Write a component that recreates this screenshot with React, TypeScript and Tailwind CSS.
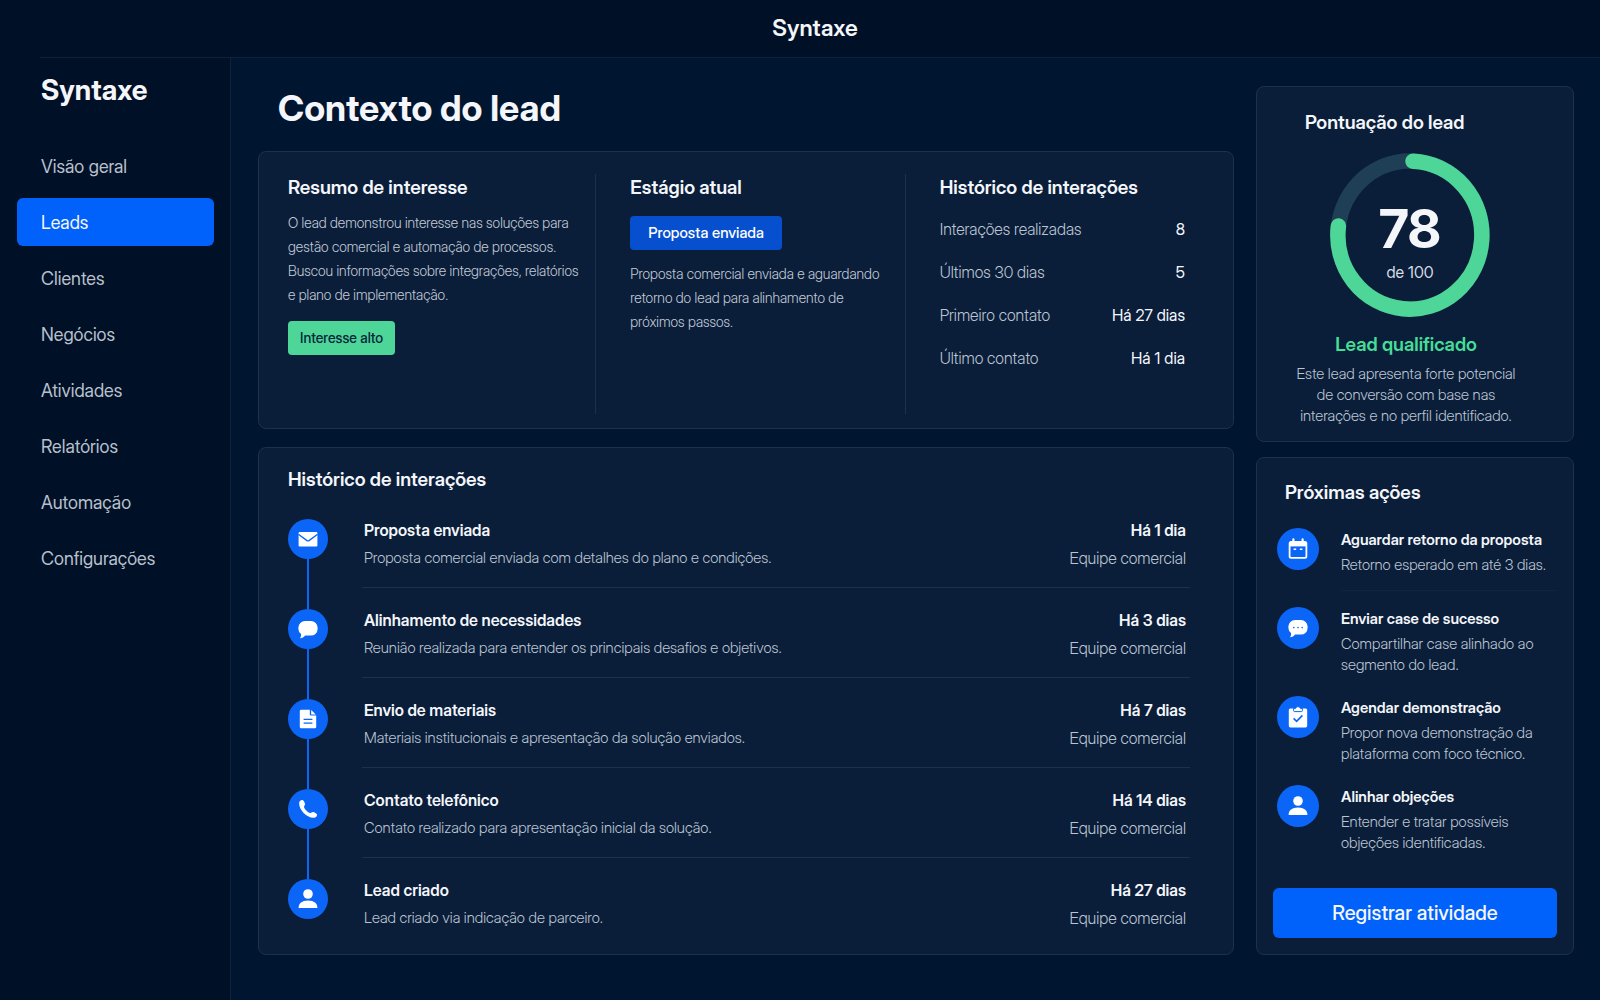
import type { ReactNode } from "react";

const navLinks = [
  { label: "Visão geral", href: "#visao-geral" },
  { label: "Leads", href: "#leads", active: true },
  { label: "Clientes", href: "#clientes" },
  { label: "Negócios", href: "#negocios" },
  { label: "Atividades", href: "#atividades" },
  { label: "Relatórios", href: "#relatorios" },
  { label: "Automação", href: "#automacao" },
  { label: "Configurações", href: "#configuracoes" },
];

const stats = [
  { label: "Interações realizadas", value: "8" },
  { label: "Últimos 30 dias", value: "5" },
  { label: "Primeiro contato", value: "Há 27 dias" },
  { label: "Último contato", value: "Há 1 dia" },
];

const Icon = ({ children }: { children: ReactNode }) => (
  <svg viewBox="0 0 24 24" className="h-6 w-6" fill="white" aria-hidden="true">
    {children}
  </svg>
);

const MailIcon = () => (
  <Icon>
    <rect x="2.6" y="5" width="18.8" height="14.4" rx="1.2" />
    <path d="M2.4 7.2L11 13.6Q12 14.3 13 13.6L21.6 7.2" fill="none" stroke="#0b66f8" strokeWidth="1.3" />
  </Icon>
);

const BubbleIcon = ({ dots = false }: { dots?: boolean }) => (
  <Icon>
    <path d="M9 4h6a6.6 6.6 0 0 1 6.6 6.6v1.4a6.6 6.6 0 0 1-6.6 6.6H9.200c-1.300 1.700-3 2.600-5.200 2.700.9-1.100 1.300-2.500 1-4.200A6.600 6.600 0 0 1 2.400 12v-1.400A6.600 6.600 0 0 1 9 4z" />
    {dots && (
      <g fill="#0b66f8">
        <circle cx="7.8" cy="11.6" r="0.8" />
        <circle cx="12" cy="11.6" r="0.8" />
        <circle cx="16.2" cy="11.6" r="0.8" />
      </g>
    )}
  </Icon>
);

const FileIcon = () => (
  <Icon>
    <path d="M5 2.8h8.8v4.4a1.4 1.4 0 0 0 1.4 1.4h5V20a1.2 1.2 0 0 1-1.2 1.2H5A1.2 1.2 0 0 1 3.8 20V4A1.2 1.2 0 0 1 5 2.8z" />
    <path d="M15.2 3l4.6 4.4h-4.6z" />
    <path d="M7.6 12.4h8.8M7.6 16.2h8.8" stroke="#0b66f8" strokeWidth="1.3" />
  </Icon>
);

const PhoneIcon = () => (
  <Icon>
    <path d="M3.2 5.6c.3-1.8 2-3 3.3-2.6 1 .3 2.3 2.7 2.5 3.9.2 1.1-1.1 1.9-1 2.9.3 2.3 3.9 5.9 6.2 6.2 1 .1 1.8-1.2 2.9-1 1.2.2 3.7 1.5 3.9 2.5.4 1.4-.8 3-2.6 3.3C11.3 21.7 2.3 12.7 3.2 5.6z" />
  </Icon>
);

const PersonIcon = () => (
  <Icon>
    <circle cx="12" cy="7" r="4.8" />
    <path d="M2.6 21c0-4.6 3.4-7.4 9.4-7.4s9.4 2.8 9.4 7.4z" />
  </Icon>
);

const CalendarIcon = () => (
  <Icon>
    <rect x="3.6" y="4.8" width="16.8" height="16" rx="1.6" fill="none" stroke="white" strokeWidth="1.8" />
    <path d="M3.6 4.8h16.8v4.6H3.6z" />
    <path d="M7.4 2.4v3M16.6 2.4v3" stroke="white" strokeWidth="2.2" strokeLinecap="round" />
    <path d="M7.6 12.2h2.6M13.8 12.2h2.6" stroke="white" strokeWidth="1.4" />
  </Icon>
);

const ClipboardIcon = () => (
  <Icon>
    <rect x="2.8" y="3.4" width="18.4" height="19" rx="1.6" />
    <path
      d="M7.6 5.6V3.4h2a2.5 2.5 0 0 1 4.8 0h2v2.2a1 1 0 0 1-1 1H8.6a1 1 0 0 1-1-1z"
      stroke="#0b66f8"
      strokeWidth="1"
    />
    <path d="M7.6 13.4l3 3 5.8-6" fill="none" stroke="#0b66f8" strokeWidth="1.6" />
  </Icon>
);

const timeline = [
  {
    icon: <MailIcon />,
    title: "Proposta enviada",
    text: "Proposta comercial enviada com detalhes do plano e condições.",
    when: "Há 1 dia",
  },
  {
    icon: <BubbleIcon />,
    title: "Alinhamento de necessidades",
    text: "Reunião realizada para entender os principais desafios e objetivos.",
    when: "Há 3 dias",
  },
  {
    icon: <FileIcon />,
    title: "Envio de materiais",
    text: "Materiais institucionais e apresentação da solução enviados.",
    when: "Há 7 dias",
  },
  {
    icon: <PhoneIcon />,
    title: "Contato telefônico",
    text: "Contato realizado para apresentação inicial da solução.",
    when: "Há 14 dias",
  },
  {
    icon: <PersonIcon />,
    title: "Lead criado",
    text: "Lead criado via indicação de parceiro.",
    when: "Há 27 dias",
  },
];

const actions = [
  { icon: <CalendarIcon />, title: "Aguardar retorno da proposta", text: "Retorno esperado em até 3 dias." },
  { icon: <BubbleIcon dots />, title: "Enviar case de sucesso", text: "Compartilhar case alinhado ao segmento do lead." },
  { icon: <ClipboardIcon />, title: "Agendar demonstração", text: "Propor nova demonstração da plataforma com foco técnico." },
  { icon: <PersonIcon />, title: "Alinhar objeções", text: "Entender e tratar possíveis objeções identificadas." },
];

const CARD = "rounded-lg border border-[#1f304a] bg-[#0a1e3a]";
const HEADING = "text-[19px] leading-6 font-semibold text-[#f4f6fa]";

const Sidebar = () => (
  <aside className="w-[231px] shrink-0 border-r border-[#0f213c] pr-4 pl-[17px]">
    <p className="px-6 pt-3 text-[28px] leading-10 font-bold text-[#f4f6fa]">Syntaxe</p>
    <nav className="mt-8 flex flex-col gap-2">
      {navLinks.map((link) => (
        <a
          key={link.label}
          href={link.href}
          aria-current={link.active ? "page" : undefined}
          className={`flex h-12 items-center rounded-md px-6 pt-0.5 text-lg ${
            link.active ? "bg-[#0062fb] text-[#f4f6fa]" : "text-[#b9c0cd]"
          }`}
        >
          {link.label}
        </a>
      ))}
    </nav>
  </aside>
);

const Summary = () => (
  <section className={`${CARD} grid min-h-[278px] grid-cols-[338fr_310fr_328fr] pt-[22px] pb-3.5`}>
    <div className="border-r border-[#1f304a] pl-[29px]">
      <h2 className={`${HEADING} mt-0.5`}>Resumo de interesse</h2>
      <p className="mt-[11px] text-sm leading-6 font-light text-[#c3cad6]">
        O lead demonstrou interesse nas soluções para
        <br />
        gestão comercial e automação de processos.
        <br />
        Buscou informações sobre integrações, relatórios
        <br />
        e plano de implementação.
      </p>
      <span className="mt-3.5 inline-flex h-[34px] items-center rounded bg-[#4ed598] px-3 text-sm font-medium text-[#06263a]">
        Interesse alto
      </span>
    </div>
    <div className="border-r border-[#1f304a] pl-[34px]">
      <h2 className={`${HEADING} mt-0.5`}>Estágio atual</h2>
      <span className="mt-4 inline-flex h-[34px] items-center rounded bg-[#0650cf] px-[18px] text-[15px] font-medium text-white">
        Proposta enviada
      </span>
      <p className="mt-3 text-sm leading-6 font-light text-[#c3cad6]">
        Proposta comercial enviada e aguardando
        <br />
        retorno do lead para alinhamento de
        <br />
        próximos passos.
      </p>
    </div>
    <div className="pr-12 pl-[34px]">
      <h2 className={`${HEADING} mt-0.5`}>Histórico de interações</h2>
      <dl className="mt-[7px]">
        {stats.map((stat) => (
          <div key={stat.label} className="flex h-[43px] items-center justify-between text-base">
            <dt className="font-light text-[#bcc4d1]">{stat.label}</dt>
            <dd className="text-[#f4f6fa]">{stat.value}</dd>
          </div>
        ))}
      </dl>
    </div>
  </section>
);

const Timeline = () => (
  <section className={`${CARD} flex-1 pt-5 pr-[43px] pl-[29px]`}>
    <h2 className={HEADING}>Histórico de interações</h2>
    <ol className="mt-1.5">
      {timeline.map((item, i) => {
        const last = i === timeline.length - 1;
        return (
          <li key={item.title} className="flex h-[90px]">
            <div className="flex w-10 flex-col items-center">
              <div className={`w-0.5 flex-1 ${i > 0 ? "bg-[#0b66f8]" : ""}`} />
              <div className="flex h-10 w-10 shrink-0 items-center justify-center rounded-full bg-[#0b66f8]">{item.icon}</div>
              <div className={`h-[29px] w-0.5 ${last ? "" : "bg-[#0b66f8]"}`} />
            </div>
            <div
              className={`ml-[34px] flex flex-1 justify-between border-b pt-5 pr-1 pl-0.5 ${
                last ? "border-transparent" : "border-[#1f304a]"
              }`}
            >
              <div>
                <h3 className="text-base leading-6 font-semibold text-[#f4f6fa]">{item.title}</h3>
                <p className="mt-1 text-[15px] leading-6 font-light text-[#bcc4d1]">{item.text}</p>
              </div>
              <div className="text-right">
                <p className="text-base leading-6 font-semibold text-[#f4f6fa]">{item.when}</p>
                <p className="mt-1 text-base leading-6 font-light text-[#bcc4d1]">Equipe comercial</p>
              </div>
            </div>
          </li>
        );
      })}
    </ol>
  </section>
);

const Gauge = ({ score }: { score: number }) => (
  <div className="relative mt-[18px] ml-[73px] h-[164px] w-[160px]">
    <svg viewBox="0 0 160 164" className="h-full w-full" fill="none" strokeWidth="15.5" aria-hidden="true">
      <ellipse cx="80" cy="82" rx="72" ry="74" stroke="#1f3f56" />
      <path d="M83 8.2A72 74 0 1 1 8.4 73" stroke="#4ed598" strokeLinecap="round" />
    </svg>
    <div className="absolute inset-0 flex flex-col items-center pt-[43px]">
      <strong className="text-[54px] leading-[66px] font-bold text-[#f4f6fa]">{score}</strong>
      <span className="text-base leading-5 text-[#d5dae3]">de 100</span>
    </div>
  </div>
);

const Score = () => (
  <section className={`${CARD} pt-6 pb-[15px]`}>
    <h2 className={`${HEADING} pl-12`}>Pontuação do lead</h2>
    <Gauge score={78} />
    <div className="mt-4 pr-[18px] text-center">
      <p className="text-[19px] leading-6 font-semibold text-[#45dd96]">Lead qualificado</p>
      <p className="mt-1.5 text-[15px] leading-[21px] font-light text-[#bcc4d1]">
        Este lead apresenta forte potencial
        <br />
        de conversão com base nas
        <br />
        interações e no perfil identificado.
      </p>
    </div>
  </section>
);

const NextActions = () => (
  <section className={`${CARD} flex flex-1 flex-col px-4 pt-[23px] pb-4`}>
    <h2 className={`${HEADING} pl-3`}>Próximas ações</h2>
    <ul className="mt-[23px] flex flex-col gap-4">
      {actions.map((action, i) => (
        <li key={action.title} className="ml-1 flex min-h-[63px] gap-[22px]">
          <div className="flex h-[42px] w-[42px] shrink-0 items-center justify-center rounded-full bg-[#0b66f8]">
            {action.icon}
          </div>
          <div className={`flex-1 border-b pb-1 ${i === 0 ? "border-[#0f243f]" : "border-transparent"}`}>
            <h3 className="text-[15px] leading-6 font-semibold text-[#f4f6fa]">{action.title}</h3>
            <p className="mt-0.5 text-[15px] leading-[21px] font-light text-[#bcc4d1]">{action.text}</p>
          </div>
        </li>
      ))}
    </ul>
    <button type="button" className="mt-auto h-[50px] rounded-md bg-[#0062fb] text-xl font-medium text-[#f4f6fa]">
      Registrar atividade
    </button>
  </section>
);

const App = () => (
  <div className="flex min-h-screen flex-col bg-[#001026] font-['Inter_Display','Inter',sans-serif]">
    <header className="ml-10 flex h-[58px] items-center justify-center border-b border-[#0f213c] pr-2.5">
      <p className="text-[23px] font-semibold text-[#f4f6fa]">Syntaxe</p>
    </header>
    <div className="flex flex-1">
      <Sidebar />
      <main className="flex flex-1 gap-[22px] bg-[#001530] pt-7 pr-[26px] pb-[45px] pl-[27px]">
        <div className="flex min-w-0 flex-1 flex-col">
          <h1 className="pl-5 text-[36px] leading-[44px] font-bold text-[#f4f6fa]">Contexto do lead</h1>
          <div className="mt-[21px] flex flex-1 flex-col gap-[18px]">
            <Summary />
            <Timeline />
          </div>
        </div>
        <div className="flex w-[318px] shrink-0 flex-col gap-[15px]">
          <Score />
          <NextActions />
        </div>
      </main>
    </div>
  </div>
);

export default App;
